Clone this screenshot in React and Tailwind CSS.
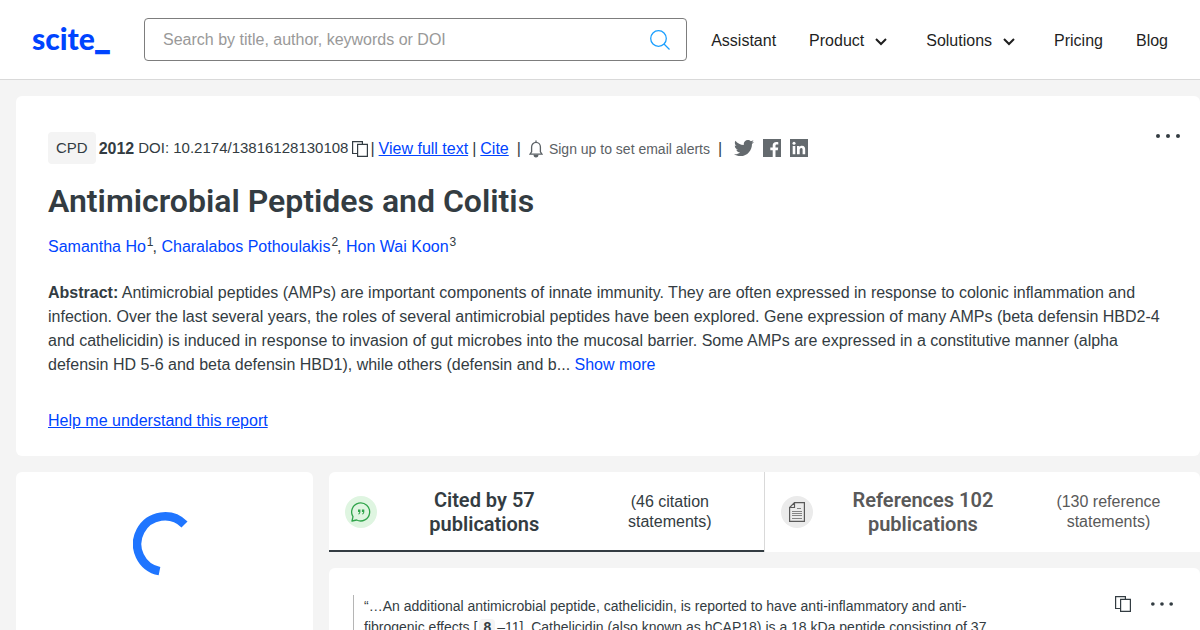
import React from 'react';
import { FaTwitter } from 'react-icons/fa';

const authors = [
  { name: 'Samantha Ho', ref: 1 },
  { name: 'Charalabos Pothoulakis', ref: 2 },
  { name: 'Hon Wai Koon', ref: 3 },
];

const navItems = [
  { label: 'Assistant' },
  { label: 'Product', menu: true },
  { label: 'Solutions', menu: true },
  { label: 'Pricing' },
  { label: 'Blog' },
];

const ChevronDown = () => (
  <svg className="ml-[9px] h-4 w-4" viewBox="0 0 16 16" fill="none" stroke="currentColor" strokeWidth="2">
    <path d="M3 6l5 5 5-5" />
  </svg>
);

const CopyIcon = () => (
  <svg className="h-4 w-4" viewBox="0 0 16 16" fill="none" stroke="currentColor" strokeWidth="1.2">
    <path d="M5 12.5H.6V.6h9.8v2.4" />
    <path d="M5.6 3.4h9.8v12H5.6z" />
  </svg>
);

const BellIcon = () => (
  <svg className="h-[18px] w-3.5" viewBox="0 0 14 18" fill="none" stroke="currentColor" strokeWidth="1.3">
    <path d="M7 .5v2M1 14.2h12l-1.600-2.400V7a4.400 4.600 0 0 0-8.800 0v4.800z" />
    <path d="M5.200 14.800a1.800 2 0 0 0 3.600 0" fill="currentColor" />
  </svg>
);

const DotsIcon = ({ className }) => (
  <svg className={className} viewBox="0 0 24 4" fill="currentColor">
    <circle cx="2" cy="2" r="2" />
    <circle cx="12" cy="2" r="2" />
    <circle cx="22" cy="2" r="2" />
  </svg>
);

const FacebookIcon = () => (
  <svg className="h-[18px] w-[18px]" viewBox="0 0 18 18" fill="currentColor">
    <path d="M0 0h18v18h-5.500v-6.800h2.300l.4-2.700h-2.700V6.900c0-.9.4-1.300 1.300-1.300h1.500V3.200c-.5-.1-1.200-.2-2-.2-2.200 0-3.600 1.300-3.600 3.600v1.900H7.300v2.700h2.400V18H0z" />
  </svg>
);

const LinkedinIcon = () => (
  <svg className="h-[18px] w-[18px]" viewBox="0 0 18 18">
    <path d="M0 0h18v18H0z" fill="currentColor" />
    <g fill="#fff">
      <circle cx="4" cy="4.300" r="1.500" />
      <path d="M2.700 7h2.600v8.200H2.700zM7 7h2.500v1.100c.5-.8 1.400-1.300 2.500-1.300 2.600 0 3.200 1.700 3.200 3.900v4.500h-2.600v-4c0-1-.1-2.100-1.300-2.100s-1.600 1-1.600 2.100v4H7z" />
    </g>
  </svg>
);

const QuoteBubble = () => (
  <svg className="h-5 w-5" viewBox="0 0 20 20" fill="none" stroke="currentColor" strokeWidth="1.300">
    <path d="M1 19l1-4.300A9 9 0 1 1 5.600 18z" strokeLinejoin="round" />
    <path d="M7 7.500h2.400v2.300c0 1.500-.7 2.400-2 2.800v-1c.6-.3.9-.8.9-1.500H7zM10.900 7.500h2.400v2.300c0 1.500-.7 2.400-2 2.800v-1c.6-.3.9-.8.9-1.500h-1.300z" fill="currentColor" stroke="none" />
  </svg>
);

const DocumentIcon = () => (
  <svg className="h-5 w-4" viewBox="0 0 16 20" fill="none" stroke="currentColor">
    <path d="M.6 5.500V19.400h14.800V.6H5.500zM.6 5.500h4.900V.6" strokeWidth="1.200" />
    <path d="M8 6.500h4M3 9.500h10M3 11.500h10M3 13.500h10M3 16.500h10" opacity=".7" />
  </svg>
);

const Header = () => (
  <header className="flex h-20 items-center border-b border-[#d9d9d9] bg-white px-8">
    <a href="#" className="w-20 shrink-0 pb-0.5 font-['Lato'] text-[30px] leading-8 font-black whitespace-nowrap text-[#0044ff]">
      scite<span className="font-['Inter']">_</span>
    </a>
    <form className="ml-8 flex h-[43px] min-w-0 flex-1 items-center rounded-sm border border-[#7d7d7d] pr-4 pl-[18px]">
      <input
        type="text"
        aria-label="Search"
        placeholder="Search by title, author, keywords or DOI"
        className="min-w-0 flex-1 bg-transparent outline-none placeholder:text-[#999]"
      />
      <button type="button" aria-label="Submit search" className="text-[#1a9fff]">
        <svg className="h-5 w-5" viewBox="0 0 20 20" fill="none" stroke="currentColor" strokeWidth="1.300">
          <circle cx="8.500" cy="8.500" r="7.800" />
          <path d="M14 14l5.500 5.500" />
        </svg>
      </button>
    </form>
    <nav className="ml-6 flex shrink-0 items-center gap-[33px] pt-0.5 text-[#1f1f1f]">
      {navItems.map((item) => (
        <a key={item.label} href="#" className={item.menu ? 'flex items-center pr-1' : 'flex items-center'}>
          {item.label}
          {item.menu && <ChevronDown />}
        </a>
      ))}
    </nav>
  </header>
);

const PaperSummary = () => (
  <section className="rounded-md bg-white px-8 pt-9 pb-6">
    <div className="flex items-start justify-between">
      <div className="flex items-center">
        <span className="mr-[3px] flex h-8 items-center rounded bg-[#f4f4f4] px-2 text-[15px]">CPD</span>
        <div className="flex items-center pt-px">
          <b className="mr-1">2012</b>
          <span className="text-[15px]">DOI: 10.2174/13816128130108</span>
          <button type="button" aria-label="Copy DOI" className="mr-0.5 ml-1">
            <CopyIcon />
          </button>
          <span>|</span>
          <a href="#" className="mx-1 text-[#0044ff] underline">View full text</a>
          <span>|</span>
          <a href="#" className="mr-2 ml-1 text-[#0044ff] underline">Cite</a>
          <span>|</span>
          <button type="button" className="mx-2 flex items-center gap-1.5 text-sm text-[#5b6165]">
            <BellIcon />
            Sign up to set email alerts
          </button>
          <span>|</span>
        </div>
        <div className="ml-3 flex items-center gap-[9px] text-[#646a6e]">
          <a href="#" aria-label="Twitter"><FaTwitter className="h-5 w-5" /></a>
          <a href="#" aria-label="Facebook"><FacebookIcon /></a>
          <a href="#" aria-label="LinkedIn"><LinkedinIcon /></a>
        </div>
      </div>
      <button type="button" aria-label="More options" className="-mr-3">
        <DotsIcon className="mt-0.5 h-1 w-6" />
      </button>
    </div>

    <h1 className="mt-4 font-['Roboto'] text-[32px] leading-[42px] font-semibold">
      Antimicrobial Peptides and Colitis
    </h1>

    <p className="mt-[13px] leading-6">
      {authors.map((author, i) => (
        <React.Fragment key={author.name}>
          {i > 0 && ', '}
          <a href="#" className="text-[#0044ff]">{author.name}</a>
          <sup className="-mr-px ml-px text-xs">{author.ref}</sup>
        </React.Fragment>
      ))}
    </p>

    <p className="mt-[22px] leading-6">
      <b>Abstract:</b> Antimicrobial peptides (AMPs) are important components of innate immunity. They are often
      expressed in response to colonic inflammation and
      <br />
      infection. Over the last several years, the roles of several antimicrobial peptides have been explored. Gene
      expression of many AMPs (beta defensin HBD2-4
      <br />
      and cathelicidin) is induced in response to invasion of gut microbes into the mucosal barrier. Some AMPs are
      expressed in a constitutive manner (alpha
      <br />
      defensin HD 5-6 and beta defensin HBD1), while others (defensin and b...{' '}
      <button type="button" className="text-[#0044ff]">Show more</button>
    </p>

    <div className="mt-8 h-[23px] leading-6">
      <a href="#" className="text-[#0044ff] underline">
        Help me understand this report
      </a>
    </div>
  </section>
);

const Spinner = () => (
  <svg className="h-16 w-16" viewBox="0 0 64 64" fill="none" stroke="#1f75ff" strokeWidth="8.500">
    <path d="M51.500 12.500A27.700 27.700 0 1 0 26.500 59.200" />
  </svg>
);

const Tabs = () => (
  <div className="flex h-20 overflow-hidden rounded-t-md bg-white">
    <button type="button" className="flex flex-1 items-center border-b-2 border-[#333c42] pt-0.5 pr-2 pl-4">
      <span className="flex h-8 w-8 shrink-0 items-center justify-center rounded-full bg-[#dff5e1] text-[#2fa44a]">
        <QuoteBubble />
      </span>
      <span className="ml-2 flex flex-1 justify-around">
        <span className="font-['Roboto'] text-xl leading-6 font-semibold">
          Cited by 57<br />publications
        </span>
        <span className="self-center leading-5">(46 citation<br />statements)</span>
      </span>
    </button>
    <button type="button" className="flex flex-1 items-center border-l border-[#d9d9d9] pr-2 pl-4 text-[#595959]">
      <span className="flex h-8 w-8 shrink-0 items-center justify-center rounded-full bg-[#ebebeb]">
        <DocumentIcon />
      </span>
      <span className="ml-2 flex flex-1 justify-around">
        <span className="font-['Roboto'] text-xl leading-6 font-semibold">
          References 102<br />publications
        </span>
        <span className="self-center leading-5">(130 reference<br />statements)</span>
      </span>
    </button>
  </div>
);

const Citation = () => (
  <article className="flex items-start justify-between rounded-md bg-white px-6 pt-[27px] pb-6">
    <blockquote className="border-l border-[#b5b5b5] pt-px pl-[10px] text-sm leading-[21px]">
      “…An additional antimicrobial peptide, cathelicidin, is reported to have anti-inflammatory and anti-
      <br />
      fibrogenic effects [<b className="mx-0.5 rounded bg-[#f4f4f4] px-1">8</b>–11]. Cathelicidin (also known as hCAP18)
      is a 18 kDa peptide consisting of 37
    </blockquote>
    <div className="mt-px flex items-center gap-5 pr-[3px]">
      <button type="button" aria-label="Copy citation"><CopyIcon /></button>
      <button type="button" aria-label="Citation options"><DotsIcon className="h-1 w-[22px]" /></button>
    </div>
  </article>
);

const App = () => {
  return (
    <div className="min-h-screen bg-[#f4f4f4] font-['Liberation_Sans',sans-serif] text-base text-[#333c42]">
      <Header />
      <main className="flex flex-col gap-4 pt-4 pl-4">
        <PaperSummary />
        <div className="flex gap-4">
          <aside className="flex w-[297px] shrink-0 justify-center rounded-md bg-white pt-10">
            <Spinner />
          </aside>
          <div className="flex min-w-0 flex-1 flex-col gap-4">
            <Tabs />
            <Citation />
          </div>
        </div>
      </main>
    </div>
  );
};

export default App;
